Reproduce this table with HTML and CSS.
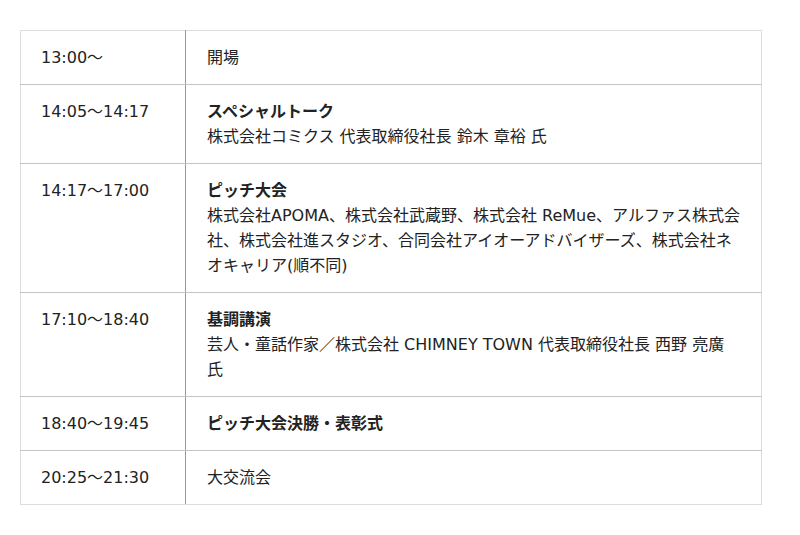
FILE: index.html
```html
<!DOCTYPE html>
<html lang="ja">
<head>
<meta charset="utf-8">
<link rel="stylesheet" href="styles.css">
</head>
<body>
<table class="schedule">
  <tr>
    <td class="time">13:00〜</td>
    <td class="desc">開場</td>
  </tr>
  <tr>
    <td class="time">14:05〜14:17</td>
    <td class="desc"><strong>スペシャルトーク</strong><br>株式会社コミクス 代表取締役社長 鈴木 章裕 氏</td>
  </tr>
  <tr>
    <td class="time">14:17〜17:00</td>
    <td class="desc"><strong>ピッチ大会</strong><br>株式会社APOMA、株式会社武蔵野、株式会社 ReMue、アルファス株式会社、株式会社進スタジオ、合同会社アイオーアドバイザーズ、株式会社ネオキャリア(順不同)</td>
  </tr>
  <tr>
    <td class="time">17:10〜18:40</td>
    <td class="desc"><strong>基調講演</strong><br>芸人・童話作家／株式会社 CHIMNEY TOWN 代表取締役社長 西野 亮廣 氏</td>
  </tr>
  <tr>
    <td class="time">18:40〜19:45</td>
    <td class="desc"><strong>ピッチ大会決勝・表彰式</strong></td>
  </tr>
  <tr>
    <td class="time">20:25〜21:30</td>
    <td class="desc">大交流会</td>
  </tr>
</table>
</body>
</html>
```
FILE: styles.css
```css
html, body {
  margin: 0;
  padding: 0;
  background: #fff;
}
body {
  padding: 30px 38px 0 20px;
  font-family: "DejaVu Sans", "Noto Sans CJK JP", sans-serif;
  font-size: 16px;
  line-height: 25px;
  color: #222;
}
.schedule {
  width: 742px;
  border-collapse: collapse;
  border: 1px solid #ddd;
}
.schedule td {
  border-top: 1px solid #c4c4c4;
  border-bottom: 1px solid #c4c4c4;
  padding: 14px 20px;
  vertical-align: top;
  text-align: left;
}
.schedule tr:first-child td {
  border-top-color: #ddd;
}
.schedule tr:last-child td {
  border-bottom-color: #ddd;
}
.schedule .time {
  width: 124px;
  border-right: 1px solid #999;
}
.schedule .desc {
  padding-left: 21px;
}
.schedule strong {
  font-weight: bold;
}
```
